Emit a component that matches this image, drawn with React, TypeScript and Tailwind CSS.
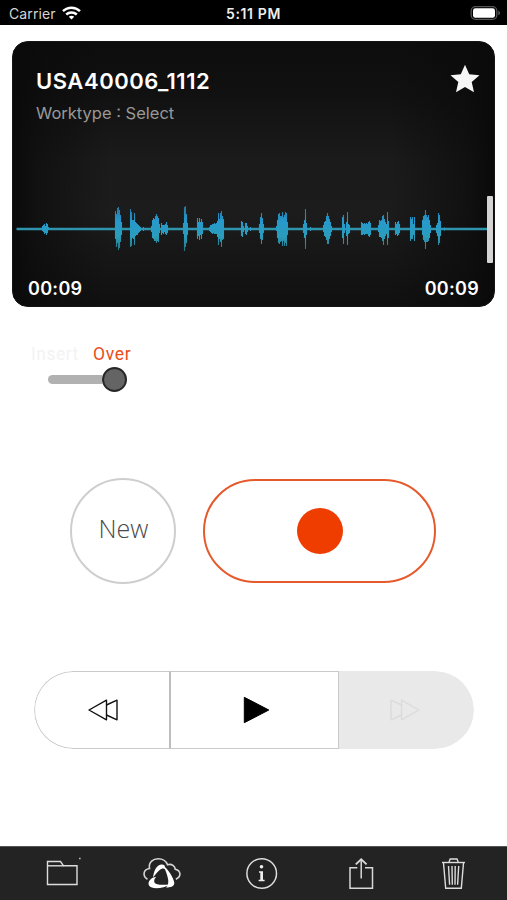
import React from 'react';

// Peaks of the recording: x position, height above and below the centre line.
const peaks: [number, number, number][] = [
  [42, 3, 2], [43, 4, 3], [44, 5, 5], [45, 3, 4], [46, 6, 6], [47, 5, 4], [48, 2, 1],
  [115, 18, 10], [116, 15, 18], [117, 21, 14], [118, 22, 21], [119, 19, 19], [120, 14, 13], [121, 7, 6],
  [130, 20, 18], [131, 17, 17], [132, 9, 9], [133, 9, 10], [134, 16, 16], [135, 7, 7], [136, 6, 6], [137, 5, 6], [138, 4, 4], [139, 3, 3], [140, 2, 2], [143, 2, 2],
  [151, 3, 3], [152, 9, 9], [153, 11, 10], [154, 10, 12], [155, 13, 12], [156, 15, 14], [157, 13, 12], [158, 11, 13], [159, 5, 4], [161, 6, 6], [162, 4, 4], [163, 4, 5], [164, 4, 3], [165, 5, 5], [166, 7, 6], [167, 4, 4],
  [183, 6, 5], [184, 22, 22], [185, 23, 18], [186, 15, 14], [187, 6, 6],
  [197, 11, 10], [198, 7, 7], [199, 11, 11], [200, 7, 6], [201, 10, 10], [202, 7, 5],
  [209, 2, 2], [210, 4, 3], [211, 4, 4], [212, 5, 5], [213, 5, 4], [214, 6, 5], [215, 5, 5], [216, 6, 5], [217, 8, 8], [218, 16, 16], [219, 10, 10], [220, 16, 13], [221, 18, 18], [222, 13, 11], [223, 10, 10],
  [241, 8, 7], [242, 7, 8], [243, 3, 3], [245, 6, 5], [246, 6, 6], [247, 3, 3], [250, 2, 2],
  [259, 5, 4], [260, 12, 10], [261, 16, 15], [262, 11, 11], [263, 5, 4],
  [276, 3, 2], [277, 9, 9], [278, 15, 14], [279, 16, 15], [280, 13, 13], [281, 13, 12], [282, 17, 17], [283, 12, 12], [284, 14, 17], [285, 17, 14], [286, 16, 17], [287, 7, 6],
  [303, 5, 4], [304, 9, 9], [305, 20, 20], [306, 6, 6], [310, 2, 2],
  [323, 4, 3], [324, 7, 7], [325, 8, 8], [326, 13, 11], [327, 16, 15], [328, 13, 15], [329, 10, 10], [330, 7, 7], [331, 3, 3],
  [342, 12, 9], [343, 14, 15], [344, 5, 4], [346, 7, 7], [347, 17, 16], [348, 5, 5], [349, 4, 4],
  [361, 7, 6], [362, 6, 6], [363, 5, 5], [364, 6, 6], [365, 5, 5], [366, 6, 5], [367, 5, 5], [368, 7, 7], [369, 8, 8], [370, 6, 6],
  [378, 4, 3], [379, 9, 8], [380, 8, 8], [381, 9, 9], [382, 13, 12], [383, 14, 16], [384, 10, 10], [385, 7, 7], [386, 5, 5], [387, 17, 16], [388, 8, 9],
  [395, 7, 6], [396, 5, 5], [397, 7, 7], [398, 8, 6], [399, 5, 4],
  [410, 12, 12], [411, 10, 10], [412, 12, 10], [413, 5, 6], [414, 12, 12],
  [422, 9, 6], [423, 13, 11], [424, 14, 13], [425, 19, 20], [426, 14, 13], [427, 12, 13], [428, 14, 12], [429, 9, 9], [430, 4, 4],
  [436, 4, 4], [437, 6, 7], [438, 16, 16], [439, 14, 14], [440, 8, 7], [444, 1.5, 1.5],
];

function Waveform() {
  const d = peaks.map(([x, up, down]) => `M${x + 0.5} ${25 - up}V${25 + down}`).join('');
  return (
    <svg className="block h-[50px] w-full" viewBox="12 0 483 50" fill="none">
      <defs>
        <linearGradient id="wave" gradientUnits="userSpaceOnUse" x1="0" y1="0" x2="0" y2="50">
          <stop offset="0" stopColor="#246f9c" />
          <stop offset=".35" stopColor="#2799cd" />
          <stop offset=".65" stopColor="#2b9cba" />
          <stop offset="1" stopColor="#286a76" />
        </linearGradient>
      </defs>
      <path d="M16.5 25H488" stroke="#2f94ad" strokeWidth="2.6" />
      <path d={d} stroke="url(#wave)" strokeWidth="1.1" />
    </svg>
  );
}

function StatusBar() {
  return (
    <header className="grid h-[25px] grid-cols-[1fr_auto_1fr] items-center bg-black pb-px pt-[4px] leading-none text-white">
      <div className="flex items-center pl-[9px]">
        <span className="w-[53px] text-[14px] tracking-[0.1px] text-[#d4d4d4]">Carrier</span>
        <svg className="-mt-[3px] h-[14px] w-[19px]" viewBox="0 0 19 14" fill="none" stroke="#fff" strokeWidth="2.5">
          <path d="M1 5.2C5.8.5 13.2.5 18 5.2" />
          <path d="M4.2 8.5c3-2.8 7.6-2.8 10.6 0" />
          <path d="M6.8 10.8c1.5-1.4 3.9-1.4 5.4 0L9.5 13.6z" fill="#fff" stroke="none" />
        </svg>
      </div>
      <span className="text-[14px] font-semibold tracking-[0.6px] text-[#ededed]">5:11 PM</span>
      <div className="flex justify-end pr-[6px]">
        <svg className="-mt-[3px] h-[14px] w-[31px]" viewBox="0 0 31 14">
          <rect x="1.2" y=".7" width="25.6" height="12.6" rx="4" fill="#000" stroke="#555" strokeWidth="1.3" />
          <rect x="3" y="2.3" width="22" height="9.5" rx="2.3" fill="#fff" />
          <path d="M28.4 4.8c2 .8 2 3.7 0 4.5z" fill="#666" />
        </svg>
      </div>
    </header>
  );
}

function RecordingCard() {
  return (
    <section className="relative mx-[12px] mt-[16px] flex h-[266px] flex-col overflow-hidden rounded-[16px] border border-[#151515] bg-[#090909] bg-[linear-gradient(to_right,#0a0a0a_0%,#0a0a0a99_5%,#0a0a0a00_20%,#0a0a0a00_78%,#0a0a0a99_94%,#0a0a0a_100%),linear-gradient(to_bottom,#0d0d0d_0%,#111_20%,#1b1b1b_45%,#1c1c1c_65%,#101010_100%)]">
      <div className="flex h-[162px] items-start justify-between pl-[23px] pr-[14px] pt-[25px]">
        <div>
          <h1 className="text-[22px] font-semibold leading-[28px] tracking-[0.55px] text-white">USA40006_1112</h1>
          <p className="mt-[6px] text-[16.5px] leading-[24px] text-[#989898]">Worktype : Select</p>
        </div>
        <svg className="-mt-[3px] h-[29px] w-[30px]" viewBox="0 0 30 29" fill="#f6f6f6">
          <path d="M15 .8L19.2 10.3L29.5 11.2L21.7 18L24 28.2L15 23L6 28.2L8.3 18L.5 11.2L10.8 10.3Z" />
        </svg>
      </div>
      <div className="-mx-px">
        <Waveform />
      </div>
      <div className="mt-[23px] flex justify-between pl-[15px] pr-[15px] text-[18px] font-semibold leading-[24px] tracking-[0.3px] text-white">
        <span>00:09</span>
        <span>00:09</span>
      </div>
      <div className="absolute right-[1px] top-[154px] h-[67px] w-[6px] rounded-[1px] bg-[#d4d4d4]" />
    </section>
  );
}

function ModeSwitch() {
  return (
    <section className="ml-[31px] mt-[36px] h-[50px] font-['Roboto',sans-serif]">
      <div className="flex h-[22px] items-center text-[17.5px] leading-[22px]">
        <span className="w-[62px] tracking-[0.5px] text-[#f3f3f3]">Insert</span>
        <span className="tracking-[0.7px] text-[#ea4d20]">Over</span>
      </div>
      <div className="ml-[17px] mt-px flex h-[26px] items-center">
        <div className="h-[9px] w-[54px] rounded-l-full bg-[#b1b1b1]" />
        <div className="size-[25px] rounded-full border-[2px] border-[#272727] bg-[#646464]" />
      </div>
    </section>
  );
}

function TransportBar() {
  return (
    <section className="ml-[34px] mt-[87px] flex h-[78px] w-[440px] overflow-hidden rounded-full">
      <button className="flex w-[135px] items-center justify-center rounded-l-full border border-r-0 border-[#cacaca]">
        <svg className="ml-[3px] h-[22px] w-[31px]" viewBox="0 0 31 22" fill="none" stroke="#111" strokeWidth="1.4" strokeLinejoin="round">
          <path d="M1 11L18.5 1.2V20.8Z" />
          <path d="M18.5 6L29 1.2V20.8L18.5 16" />
        </svg>
      </button>
      <button className="flex w-[170px] items-center justify-center border border-l-2 border-[#cacaca] border-l-[#bdbdbd]">
        <svg className="ml-[3px] h-[28px] w-[27px]" viewBox="0 0 27 28">
          <path d="M1.3 1.3L25.8 14L1.3 26.7Z" fill="#000" stroke="#000" strokeLinejoin="round" />
        </svg>
      </button>
      <button className="flex flex-1 items-center justify-center rounded-r-full bg-[#e9e9e9]">
        <svg className="-ml-[5px] h-[22px] w-[31px]" viewBox="0 0 31 22" fill="none" stroke="#dbdbdb" strokeWidth="1.4" strokeLinejoin="round">
          <path d="M30 11L12.5 1.2V20.8Z" />
          <path d="M12.5 6L2 1.2V20.8L12.5 16" />
        </svg>
      </button>
    </section>
  );
}

function Toolbar() {
  return (
    <nav className="mt-auto flex h-[54px] items-center border-t border-[#555] bg-[#232323] pb-[2px] pl-[45px] pr-[40px]">
      <svg className="h-[36px] w-[37px] shrink-0" viewBox="45 855 37 36" fill="none" stroke="#ddd" strokeWidth="1.4">
        <path d="M47.5 884.5V861.5H60.5L63.5 865.8H77V884.5Z" />
        <path d="M47.5 865.8H63.5" />
        <path d="M79.2 858.5h1.3" />
      </svg>
      <svg className="ml-[59px] h-[36px] w-[42px] shrink-0" viewBox="141 855 42 36" fill="none">
        <path d="M147.5 879.2C142.5 876.5 142.8 869.5 149.5 868.5C148.3 861.8 153.5 858.8 158 858.8C162.3 858.8 166 860.8 167.5 864.8C172 863.3 175 866.2 175.3 869.3C181.5 871 181.3 877 175.8 879.2" stroke="#d5d5d5" strokeWidth="1.6" />
        <path d="M153.2 877.5C153.5 871 156.5 866 160.3 864.8C163.5 864 165.8 865.5 165 869C162.5 867.6 159.5 868.5 153.2 877.5Z" fill="#fff" />
        <path d="M163.3 865.5C168.5 870 173.5 877.5 174.3 882.8C174.4 886 171 888 166 887.4C169.6 884.5 169.3 878.5 163.3 865.5Z" fill="#fff" />
        <path d="M156.3 876.8C151 877.5 147.3 881.7 149 885.5C151.8 890 163.5 888.5 170.3 884.3C164 885 156.5 885.5 154.6 882.8C153.4 880.7 154.8 878.5 156.3 876.8Z" fill="#fff" />
      </svg>
      <svg className="ml-[61px] h-[36px] w-[36px] shrink-0" viewBox="244 855 36 36" fill="none">
        <circle cx="261.7" cy="873.5" r="14.8" stroke="#ddd" strokeWidth="1.5" />
        <circle cx="261.5" cy="866.7" r="1.8" fill="#eee" />
        <path d="M259 871.3H263V879.8H264.6V881.2H258.6V879.8H260.3V872.8H259Z" fill="#eee" />
      </svg>
      <svg className="ml-[66px] h-[36px] w-[30px] shrink-0" viewBox="346 855 30 36" fill="none" stroke="#d8d8d8" strokeWidth="1.5">
        <path d="M357.3 867.7H350V888.3H372.5V867.7H365" />
        <path d="M361.2 878.5V859.5" />
        <path d="M355.8 864.4L361.2 859.3L366.6 864.4" strokeWidth="1.9" />
      </svg>
      <svg className="ml-[64px] h-[36px] w-[27px] shrink-0" viewBox="440 855 27 36" fill="none" stroke="#ddd" strokeWidth="1.4">
        <path d="M442 862.5H465" />
        <path d="M449 862L450.2 859H457L458.2 862" />
        <path d="M443.5 863L445.7 888.3H461.3L463.5 863" />
        <path d="M448.5 866L449.6 884.8M452 866L452.3 884.8M455.2 866L455 884.8M458.7 866L457.6 884.8" />
      </svg>
    </nav>
  );
}

export default function App() {
  return (
    <main className="flex h-[900px] w-[507px] flex-col overflow-hidden bg-white font-['Inter',sans-serif]">
      <StatusBar />
      <RecordingCard />
      <ModeSwitch />
      <section className="ml-[70px] mt-[85px] flex h-[106px] items-center">
        <button className="flex size-[106px] items-center justify-center rounded-full border-2 border-[#cecece] pb-[4px] pl-px font-['Open_Sans',sans-serif] text-[25px] font-light text-[#4a4a4a]">
          New
        </button>
        <button className="ml-[27px] flex h-[104px] w-[233px] items-center justify-center rounded-full border-2 border-[#e55a2d]">
          <span className="size-[46px] rounded-full bg-[#ef3d00]" />
        </button>
      </section>
      <TransportBar />
      <Toolbar />
    </main>
  );
}
